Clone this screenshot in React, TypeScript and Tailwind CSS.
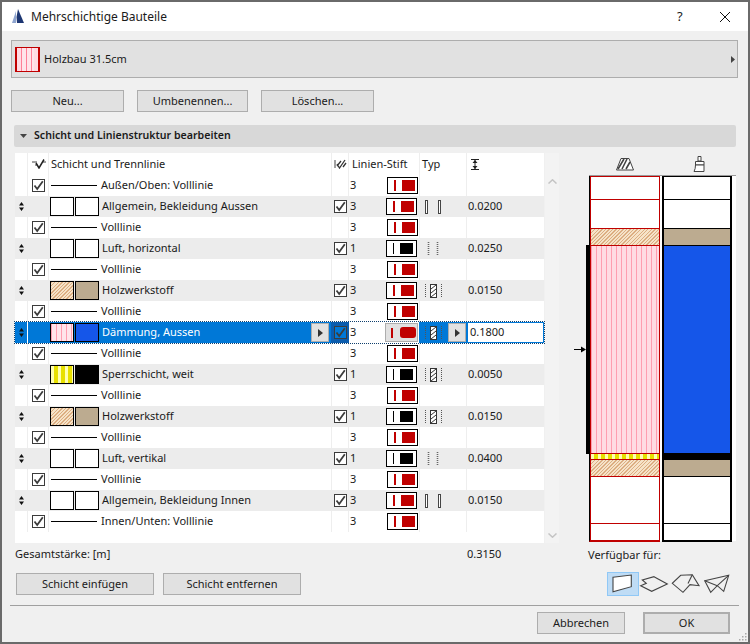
type Fill = 'empty' | 'white' | 'hatch' | 'tan' | 'pink' | 'blue' | 'yellow' | 'black'
type Row =
  | { kind: 'line'; name: string }
  | { kind: 'fill'; name: string; a: Fill; b: Fill; pen: number; type: 'solid' | 'air' | 'hatch'; size: string; selected?: boolean }

const ROWS: Row[] = [
  { kind: 'line', name: 'Außen/Oben: Volllinie' },
  { kind: 'fill', name: 'Allgemein, Bekleidung Aussen', a: 'empty', b: 'white', pen: 3, type: 'solid', size: '0.0200' },
  { kind: 'line', name: 'Volllinie' },
  { kind: 'fill', name: 'Luft, horizontal', a: 'empty', b: 'white', pen: 1, type: 'air', size: '0.0250' },
  { kind: 'line', name: 'Volllinie' },
  { kind: 'fill', name: 'Holzwerkstoff', a: 'hatch', b: 'tan', pen: 3, type: 'hatch', size: '0.0150' },
  { kind: 'line', name: 'Volllinie' },
  { kind: 'fill', name: 'Dämmung, Aussen', a: 'pink', b: 'blue', pen: 3, type: 'hatch', size: '0.1800', selected: true },
  { kind: 'line', name: 'Volllinie' },
  { kind: 'fill', name: 'Sperrschicht, weit', a: 'yellow', b: 'black', pen: 1, type: 'hatch', size: '0.0050' },
  { kind: 'line', name: 'Volllinie' },
  { kind: 'fill', name: 'Holzwerkstoff', a: 'hatch', b: 'tan', pen: 1, type: 'hatch', size: '0.0150' },
  { kind: 'line', name: 'Volllinie' },
  { kind: 'fill', name: 'Luft, vertikal', a: 'empty', b: 'white', pen: 1, type: 'air', size: '0.0400' },
  { kind: 'line', name: 'Volllinie' },
  { kind: 'fill', name: 'Allgemein, Bekleidung Innen', a: 'empty', b: 'white', pen: 3, type: 'solid', size: '0.0150' },
  { kind: 'line', name: 'Innen/Unten: Volllinie' },
]

const FILLS: Record<Fill, string> = {
  empty: 'bg-white',
  white: 'bg-white',
  hatch: 'bg-[repeating-linear-gradient(135deg,#dcae82_0_1px,#f6e3c8_1px_2.5px)]',
  tan: 'bg-[#bcab90]',
  pink: 'bg-[repeating-linear-gradient(90deg,#ff9db0_0_1px,#ffe4ea_1px_5px)]',
  blue: 'bg-[#1556e9]',
  yellow: 'bg-[repeating-linear-gradient(90deg,#ffffb0_0_3px,#e8e000_3px_7px)]',
  black: 'bg-black',
}

function Check({ className = 'bg-white' }: { className?: string }) {
  return (
    <span className={`flex h-[13px] w-[13px] items-center justify-center border border-[#3c3c3c] ${className}`}>
      <svg width="11" height="11" viewBox="0 0 11 11">
        <path d="M1.5 5.5 L4.2 9 L9.8 1.2" fill="none" stroke="#3c3c3c" strokeWidth="1.8" />
      </svg>
    </span>
  )
}

function Handle() {
  return (
    <svg width="5" height="9" viewBox="0 0 5 9" className="ml-[4px]">
      <path d="M2.5 0 L5 3.5 H0 Z M0 5.5 H5 L2.5 9 Z" fill="#111" />
    </svg>
  )
}

function Pen({ pen, selected }: { pen: number; selected?: boolean }) {
  const color = pen === 1 ? 'bg-black' : 'bg-[#c00000]'
  if (selected) {
    return (
      <span className="ml-[23px] flex h-[19px] w-[33px] items-center border border-[#adadad] bg-[#e1e1e1] pl-[5px]">
        <span className={`h-[10px] w-[2px] ${color}`} />
        <span className={`ml-[7px] h-[11px] w-[16px] rounded-[3px] ${color}`} />
      </span>
    )
  }
  return (
    <span className="ml-[24px] flex h-[17px] w-[31px] items-center border border-black bg-white pl-[6px]">
      <span className={`h-[11px] ${pen === 1 ? 'w-px' : 'w-[2px]'} ${color}`} />
      <span className={`ml-[6px] h-[11px] w-[13px] ${color}`} />
    </span>
  )
}

function TypeIcon({ type }: { type: 'solid' | 'air' | 'hatch' }) {
  if (type === 'solid') {
    return (
      <svg width="24" height="14" viewBox="0 0 24 14" className="ml-[5px]">
        <rect x="1.5" y="0.5" width="2" height="13" fill="#fff" stroke="#444" />
        <rect x="14.5" y="0.5" width="2" height="13" fill="#fff" stroke="#444" />
      </svg>
    )
  }
  if (type === 'air') {
    return (
      <svg width="24" height="14" viewBox="0 0 24 14" className="ml-[5px]">
        <path d="M4.5 0 V14 M13.5 0 V14" stroke="#666" strokeWidth="1.6" strokeDasharray="1 1" />
      </svg>
    )
  }
  return (
    <svg width="24" height="14" viewBox="0 0 24 14" className="ml-[5px]">
      <path d="M1.5 0 V14 M17.5 0 V14" stroke="#555" strokeDasharray="1 1" />
      <rect x="6.5" y="0.5" width="6" height="13" fill="#fff" stroke="#333" />
      <path d="M7 5 L12 1 M7 9 L12 5 M7 13 L12 9" stroke="#333" />
    </svg>
  )
}

function ArrowButton() {
  return (
    <span className="flex h-[19px] w-[18px] items-center justify-center border border-[#adadad] bg-[#e1e1e1]">
      <svg width="5" height="8" viewBox="0 0 5 8">
        <path d="M0 0 L5 4 L0 8 Z" fill="#333" />
      </svg>
    </span>
  )
}

function LayerRow({ row }: { row: Row }) {
  if (row.kind === 'line') {
    return (
      <div className="flex h-[21px] bg-white">
        <div className="w-[12px]" />
        <div className="flex w-[22px] items-center border-x border-[#eeeeee] pl-[4px]">
          <Check />
        </div>
        <div className="flex w-[282px] items-center">
          <span className="ml-[2px] h-px w-[46px] bg-black" />
          <span className="ml-[4px]">{row.name}</span>
        </div>
        <div className="w-[18px] border-x border-[#eeeeee]" />
        <div className="flex w-[70px] items-center pl-[1px]">
          <span className="w-[13px]">3</span>
          <Pen pen={3} />
        </div>
        <div className="w-[48px] border-x border-[#eeeeee]" />
        <div className="w-[77px]" />
      </div>
    )
  }
  const sel = row.selected
  return (
    <div className={`flex h-[21px] ${sel ? 'bg-[#0078d7] outline-1 outline-dotted outline-[#10406e]' : 'bg-[#ececec]'}`}>
      <div className="flex w-[12px] items-center">
        <Handle />
      </div>
      <div className={`w-[22px] ${sel ? 'border-l border-white' : ''}`} />
      <div className={`flex w-[282px] items-center ${sel ? 'text-white' : ''}`}>
        <span className={`ml-px h-[19px] w-[24px] border border-black ${FILLS[row.a]}`} />
        <span className={`ml-px h-[19px] w-[24px] border border-black ${FILLS[row.b]}`} />
        <span className="ml-[3px] flex-1">{row.name}</span>
        {sel && <ArrowButton />}
        {sel && <span className="w-[2px]" />}
      </div>
      <div className={`flex w-[18px] items-center pl-[3px] ${sel ? 'bg-[#0b5cad]' : ''}`}>
        <Check className={sel ? 'bg-[#0078d7]' : 'bg-white'} />
      </div>
      <div className={`flex w-[70px] items-center pl-[1px] ${sel ? 'bg-white' : ''}`}>
        <span className="w-[12px]">{row.pen}</span>
        <Pen pen={row.pen} selected={sel} />
      </div>
      <div className="flex w-[48px] items-center">
        <TypeIcon type={row.type} />
        {sel && <ArrowButton />}
      </div>
      <div className={`flex w-[77px] items-center ${sel ? 'border border-[#0078d7] bg-white pl-[2px]' : 'pl-[1px]'}`}>
        {row.size}
      </div>
    </div>
  )
}

function LayerTable() {
  return (
    <div className="h-[390px] w-[529px] bg-white">
      <div className="flex h-[22px] items-center bg-white">
        <div className="w-[12px]" />
        <div className="flex h-full w-[22px] items-center border-x border-[#eeeeee] pl-[4px]">
          <svg width="15" height="10" viewBox="0 0 15 10">
            <path d="M0 3 H5 M3 6 H5 M11 3 H14" stroke="#444" />
            <path d="M4 4 L7 9 L12 0.5" fill="none" stroke="#222" strokeWidth="1.5" />
          </svg>
        </div>
        <div className="w-[282px] pl-[2px]">Schicht und Trennlinie</div>
        <div className="flex h-full w-[18px] items-center border-x border-[#eeeeee] pl-[2px]">
          <svg width="14" height="10" viewBox="0 0 14 10">
            <path d="M1 1 V9" stroke="#444" />
            <path d="M3 5 L5.5 9 L11 1 M7 2 L3 7 M12 4 L9 8" fill="none" stroke="#333" strokeWidth="1.3" />
          </svg>
        </div>
        <div className="w-[70px] pl-[3px]">Linien-Stift</div>
        <div className="flex h-full w-[48px] items-center border-x border-[#eeeeee] pl-[2px]">Typ</div>
        <div className="w-[77px] pl-[4px]">
          <svg width="8" height="11" viewBox="0 0 8 11">
            <path d="M0 0.5 H8 M0 10.5 H8 M4 1 V10" stroke="#222" />
            <path d="M1.5 4 L4 1 L6.5 4 Z M1.5 7 L4 10 L6.5 7 Z" fill="#222" />
          </svg>
        </div>
      </div>
      {ROWS.map((row, i) => (
        <LayerRow key={i} row={row} />
      ))}
    </div>
  )
}

function Scrollbar() {
  return (
    <div className="ml-px flex h-[390px] w-[14px] flex-col items-center justify-between bg-[#f3f3f3] pb-[5px] pt-[26px]">
      <svg width="9" height="5" viewBox="0 0 9 5">
        <path d="M0.5 4.5 L4.5 0.8 L8.5 4.5" fill="none" stroke="#c4c4c4" strokeWidth="1.5" />
      </svg>
      <svg width="9" height="5" viewBox="0 0 9 5">
        <path d="M0.5 0.5 L4.5 4.2 L8.5 0.5" fill="none" stroke="#c4c4c4" strokeWidth="1.5" />
      </svg>
    </div>
  )
}

const SECTIONS: { h: string; l: string; r: string }[] = [
  { h: 'h-[23px]', l: 'bg-white', r: 'bg-white' },
  { h: 'h-[29px]', l: 'bg-white', r: 'bg-white' },
  { h: 'h-[17px]', l: FILLS.hatch, r: FILLS.tan },
  { h: 'h-[208px]', l: 'bg-[repeating-linear-gradient(90deg,#ff9db0_0_1px,#ffdbe3_1px_5px)]', r: FILLS.blue },
  { h: 'h-[6px]', l: FILLS.yellow, r: 'bg-black' },
  { h: 'h-[17px]', l: FILLS.hatch, r: FILLS.tan },
  { h: 'h-[47px]', l: 'bg-white', r: 'bg-white' },
  { h: 'h-[17px]', l: 'bg-white', r: 'bg-white' },
]

function Preview() {
  return (
    <div className="flex h-[366px]">
      <div className="mt-[70px] flex h-[209px] w-[15px] items-center">
        <svg width="12" height="7" viewBox="0 0 12 7">
          <path d="M0 3.5 H8" stroke="#000" />
          <path d="M7 0.5 L12 3.5 L7 6.5 Z" fill="#000" />
        </svg>
        <span className="h-full w-[3px] bg-black" />
      </div>
      <div className="flex w-[147px] flex-col border-t border-[#9a9a9a] bg-white">
        <div className="flex">
          <div className="w-[71px] border-b-2 border-l border-b-[#c00000] border-l-black">
            {SECTIONS.map((s, i) => (
              <div key={i} className={`${s.h} box-border border-x border-t border-[#c00000] ${s.l}`} />
            ))}
          </div>
          <div className="ml-[2px] w-[70px] border-x-2 border-b-2 border-black">
            {SECTIONS.map((s, i) => (
              <div key={i} className={`${s.h} box-border border-t border-black ${s.r}`} />
            ))}
          </div>
        </div>
      </div>
    </div>
  )
}

function Swatch() {
  return (
    <span className="flex h-[25px] w-[25px] border-x-2 border-y border-[#c00000] bg-[#ffdbe3] px-[4px]">
      <span className="h-full w-full bg-[repeating-linear-gradient(90deg,#ff7f97_0_1px,#ffe4ea_1px_5px)]" />
    </span>
  )
}

function Button({ label, className }: { label: string; className: string }) {
  return (
    <button className={`flex h-[22px] items-center justify-center border border-[#adadad] bg-[#e1e1e1] ${className}`}>
      {label}
    </button>
  )
}

function ElementIcon({ points, inner, selected }: { points: string; inner?: string; selected?: boolean }) {
  return (
    <span className={`flex h-[24px] w-[32px] ${selected ? 'border border-[#90c8f6] bg-[#bfdcf5]' : ''}`}>
      <svg width="32" height="24" viewBox="0 0 32 24" className={selected ? '-m-px shrink-0' : 'shrink-0'}>
        <polygon points={points} fill={selected ? '#fff' : 'none'} stroke="#444" strokeWidth="1.1" />
        {inner && <path d={inner} fill="none" stroke="#444" strokeWidth="1.1" />}
      </svg>
    </span>
  )
}

export default function App() {
  return (
    <div className="relative box-border flex h-[644px] w-[750px] flex-col border-2 border-[#6a6a6a] bg-[#f0f0f0] font-['Noto_Sans',sans-serif] text-[11px] text-[#1a1a1a]">
      <div className="flex h-[29px] items-center bg-white pl-[9px] text-[12px]">
        <svg width="14" height="15" viewBox="0 0 14 15">
          <path d="M5 2 L1 14 H5 Z" fill="#8ea4cf" />
          <path d="M7 0 L13 14 H6 L5.5 8 Z" fill="#1d3672" />
        </svg>
        <span className="ml-[6px] flex-1">Mehrschichtige Bauteile</span>
        <span className="w-[10px] text-[13px]">?</span>
        <svg width="12" height="12" viewBox="0 0 12 12" className="ml-[32px] mr-[17px]">
          <path d="M1 1 L11 11 M11 1 L1 11" stroke="#111" />
        </svg>
      </div>

      <div className="ml-[9px] mt-[9px] flex h-[38px] w-[727px] items-center border border-[#adadad] bg-[#e1e1e1] pl-[3px] pr-[2px]">
        <Swatch />
        <span className="ml-[4px] flex-1">Holzbau 31.5cm</span>
        <svg width="4" height="7" viewBox="0 0 4 7">
          <path d="M0 0 L4 3.5 L0 7 Z" fill="#444" />
        </svg>
      </div>

      <div className="ml-[9px] mt-[12px] flex gap-[13px]">
        <Button label="Neu..." className="w-[113px]" />
        <Button label="Umbenennen..." className="w-[111px]" />
        <Button label="Löschen..." className="w-[113px]" />
      </div>

      <div className="ml-[12px] mt-[13px] flex h-[22px] w-[722px] items-center rounded-[2px] bg-[#d8d8d8] pl-[6px] text-[10.6px] font-semibold">
        <svg width="7" height="4" viewBox="0 0 7 4">
          <path d="M0 0 H7 L3.5 4 Z" fill="#444" />
        </svg>
        <span className="ml-[7px]">Schicht und Linienstruktur bearbeiten</span>
      </div>

      <div className="ml-[13px] mt-[6px] flex">
        <div className="w-[544px]">
          <div className="flex">
            <LayerTable />
            <Scrollbar />
          </div>
          <div className="flex h-[22px] items-center">
            <span className="w-[452px]">Gesamtstärke: [m]</span>
            <span>0.3150</span>
          </div>
          <div className="ml-px mt-[8px] flex gap-[9px]">
            <Button label="Schicht einfügen" className="w-[138px]" />
            <Button label="Schicht entfernen" className="w-[138px]" />
          </div>
        </div>

        <div className="ml-[15px] w-[163px]">
          <div className="flex h-[22px] items-center pl-[42px]">
            <svg width="18" height="13" viewBox="0 0 18 13">
              <path d="M5 0.5 H13 L17.5 12 H0.5 Z" fill="#fff" stroke="#444" />
              <path d="M2 11 L8 1 M6 11 L11 1 M10 11 L14 4" stroke="#444" strokeWidth="1.6" />
            </svg>
            <svg width="13" height="16" viewBox="0 0 13 16" className="ml-[59px]">
              <path d="M5 0.5 H8 V5 H5 Z M2.5 5.5 H11 V9 H2.5 Z" fill="#fff" stroke="#444" />
              <path d="M2.5 9 H11 V15.5 H1 Q2.5 13 2.5 9 Z" fill="#fff" stroke="#444" />
            </svg>
          </div>
          <Preview />
          <div className="ml-[14px] mt-[3px] flex h-[22px] items-center">Verfügbar für:</div>
          <div className="ml-[33px] mt-[6px] flex">
            <ElementIcon selected points="6,5.3 24.3,3 24.3,14.7 6,19.7" />
            <ElementIcon points="15,4.7 28.3,12 12.7,19.3 1.7,13.7 7.3,11.3 3.3,8" />
            <ElementIcon points="9.7,3.3 21.3,2.7 28,13.7 19,12.7 12,20.3 1.3,11.3" inner="M21.3 2.7 L17 11.5" />
            <ElementIcon points="1.7,8.7 25.7,3.3 20.7,19.3 14.3,13.7 7.7,20.3" inner="M25.7 3.3 L14.3 13.7 M1.7 8.7 L14.3 13.7" />
          </div>
        </div>
      </div>

      <div className="ml-[8px] mt-[9px] h-px w-[729px] bg-[#a0a0a0]" />

      <div className="mt-[6px] flex justify-end pr-[18px]">
        <Button label="Abbrechen" className="w-[88px]" />
        <Button label="OK" className="ml-[18px] w-[87px] border-2 border-[#0078d7]" />
      </div>

      <svg width="9" height="9" viewBox="0 0 9 9" className="absolute bottom-px right-px">
        <path d="M7 1 h1.5 v1.5 h-1.5 Z M4 4 h1.5 v1.5 h-1.5 Z M7 4 h1.5 v1.5 h-1.5 Z M1 7 h1.5 v1.5 h-1.5 Z M4 7 h1.5 v1.5 h-1.5 Z M7 7 h1.5 v1.5 h-1.5 Z" fill="#a8a8a8" />
      </svg>
    </div>
  )
}
